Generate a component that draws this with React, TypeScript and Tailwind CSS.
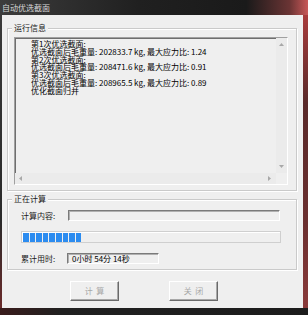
import React from 'react';

const cjk = { fontFamily: '"Noto Sans CJK SC", "Noto Sans", sans-serif' };

const ArrowUp = () => (
  <svg width="5" height="3" viewBox="0 0 5 3"><path d="M0 3 L2.5 0 L5 3 Z" fill="#a8a8a8" /></svg>
);
const ArrowDown = () => (
  <svg width="5" height="3" viewBox="0 0 5 3"><path d="M0 0 L2.5 3 L5 0 Z" fill="#a8a8a8" /></svg>
);
const ArrowLeft = () => (
  <svg width="3" height="5" viewBox="0 0 3 5"><path d="M3 0 L0 2.5 L3 5 Z" fill="#a8a8a8" /></svg>
);
const ArrowRight = () => (
  <svg width="3" height="5" viewBox="0 0 3 5"><path d="M0 0 L3 2.5 L0 5 Z" fill="#a8a8a8" /></svg>
);

const LINES = [
  '第1次优选截面:',
  '优选截面后毛重量: 202833.7 kg, 最大应力比: 1.24',
  '第2次优选截面:',
  '优选截面后毛重量: 208471.6 kg, 最大应力比: 0.91',
  '第3次优选截面:',
  '优选截面后毛重量: 208965.5 kg, 最大应力比: 0.89',
  '优化截面归并',
];

// Windows classic etched group box
const GroupBox = ({ title, className, children }: { title: string; className: string; children: React.ReactNode }) => (
  <div className={`relative border border-[#cacaca] shadow-[1px_1px_0_#ffffff,inset_1px_1px_0_#ffffff] ${className}`}>
    <span className="absolute left-[4px] top-[-6px] bg-[#efefef] px-[2px] text-[8px] leading-[10px] text-[#1a1a1a]" style={cjk}>
      {title}
    </span>
    {children}
  </div>
);

const Button = ({ text }: { text: string }) => (
  <div className="w-[49px] h-[20px] border border-t-[#ffffff] border-l-[#ffffff] border-r-[#6a6a6a] border-b-[#6a6a6a] shadow-[inset_-1px_-1px_0_#a8a8a8] bg-[#efefef] flex items-center justify-center text-[8px] text-[#a7a7a7] whitespace-pre" style={cjk}>
    {text}
  </div>
);

export default function App() {
  return (
    <div className="w-[308px] h-[315px] bg-[#222222] flex flex-col overflow-hidden">
      {/* Title bar */}
      <div className="h-[15px] shrink-0 flex items-center pl-[2px] bg-[linear-gradient(90deg,#3c3c3c_0%,#202020_45%,#1a1a1a_80%,#6a3434_94%,#c85858_100%)]">
        <span className="text-[8px] leading-none text-[#d8d8d8]" style={cjk}>自动优选截面</span>
      </div>

      <div className="flex flex-1">
        <div className="w-[2px] bg-[linear-gradient(180deg,#3a3a3a_0%,#2a2a2a_70%,#6a2a2a_100%)]" />

        {/* Dialog body */}
        <div className="w-[301px] bg-[#efefef] flex flex-col pl-[5px] pt-[13px]">
          <GroupBox title="运行信息" className="w-[290px] h-[163px] pt-[8px] pl-[6px]">
            {/* List box */}
            <div className="w-[274px] h-[148px] border border-t-[#a0a0a0] border-l-[#a0a0a0] border-r-[#ffffff] border-b-[#ffffff] shadow-[inset_1px_1px_0_#6e6e6e] flex flex-col bg-[#efefef]">
              <div className="flex flex-1 min-h-0">
                <div className="flex-1 pl-[16px] pt-[2px] overflow-hidden">
                  {LINES.map((line, i) => (
                    <div key={i} className="text-[8px] leading-[7.8px] text-[#000000] whitespace-pre" style={cjk}>
                      {line}
                    </div>
                  ))}
                </div>
                <div className="w-[11px] bg-[#ebebeb] flex flex-col items-center justify-between pt-[5px] pb-[5px]">
                  <ArrowUp />
                  <ArrowDown />
                </div>
              </div>
              <div className="h-[11px] flex">
                <div className="flex-1 bg-[#ebebeb] flex items-center justify-between pl-[4px] pr-[5px]">
                  <ArrowLeft />
                  <ArrowRight />
                </div>
                <div className="w-[11px] bg-[#efefef]" />
              </div>
            </div>
          </GroupBox>

          <GroupBox title="正在计算" className="mt-[8px] w-[290px] h-[71px] pl-[13px] pt-[10px]">
            <div className="flex items-center h-[11px]">
              <span className="w-[47px] text-[8px] leading-none text-[#1a1a1a] whitespace-pre" style={cjk}>计算内容:</span>
              <div className="w-[212px] h-[11px] border border-t-[#7a7a7a] border-l-[#7a7a7a] border-r-[#ffffff] border-b-[#ffffff] shadow-[inset_1px_1px_0_#b0b0b0] bg-[#efefef]" />
            </div>

            {/* Progress bar */}
            <div className="mt-[10px] w-[260px] h-[12px] border border-[#cfcfcf] shadow-[inset_1px_1px_0_#ffffff] flex items-center gap-[1px] pl-[1px]">
              {Array.from({ length: 9 }).map((_, i) => (
                <div key={i} className="w-[5.6px] h-[9px] bg-[#2c8cf0]" />
              ))}
            </div>

            <div className="flex items-center h-[11px] mt-[10px]">
              <span className="w-[46px] text-[8px] leading-none text-[#1a1a1a] whitespace-pre" style={cjk}>累计用时:</span>
              <div className="w-[92px] h-[11px] border border-t-[#7a7a7a] border-l-[#7a7a7a] border-r-[#ffffff] border-b-[#ffffff] shadow-[inset_1px_1px_0_#b0b0b0] bg-[#efefef] flex items-center pl-[4px]">
                <span className="text-[8px] leading-none text-[#000000] whitespace-pre" style={cjk}>0小时 54分 14秒</span>
              </div>
            </div>
          </GroupBox>

          <div className="mt-[11px] flex pl-[63px] gap-[50px]">
            <Button text="计  算" />
            <Button text="关  闭" />
          </div>
        </div>

        <div className="w-[5px] bg-[linear-gradient(180deg,#a83c3c_0%,#5a2a2a_30%,#6a2f2f_70%,#8a3a3a_100%)]" />
      </div>

      <div className="h-[7px] shrink-0 bg-[linear-gradient(90deg,#3a1c1c_0%,#202020_20%,#1c1c1c_100%)]" />
    </div>
  );
}
